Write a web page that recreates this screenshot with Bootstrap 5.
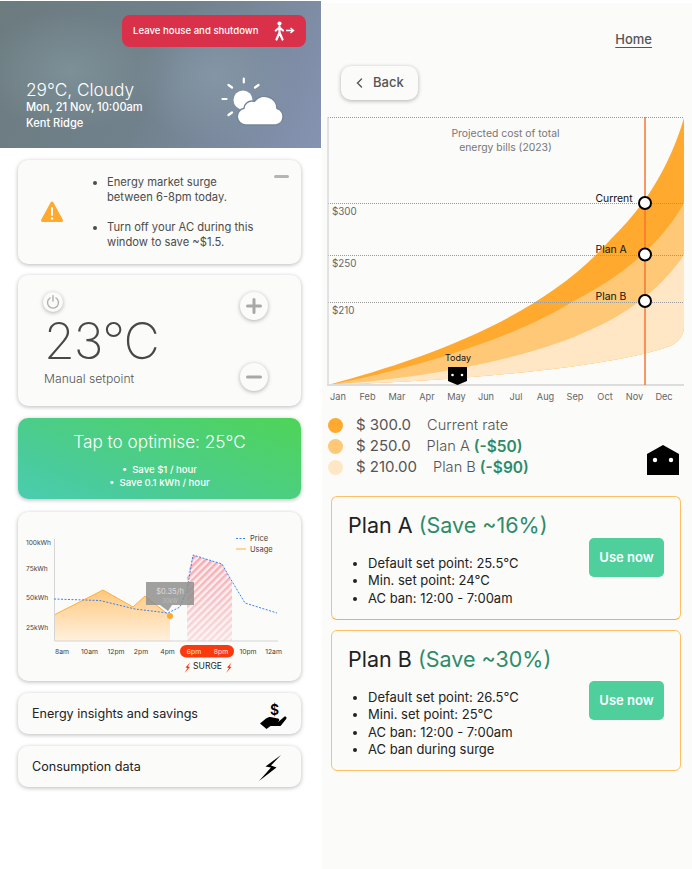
<!DOCTYPE html>
<html lang="en">
<head>
    <meta charset="UTF-8">
    <meta name="viewport" content="width=device-width, initial-scale=1.0">
    <title>Energy dashboard</title>
    <link rel="stylesheet" href="https://cdn.jsdelivr.net/npm/bootstrap@5.3.3/dist/css/bootstrap.min.css">
    <style>
        body { font-family: Inter, "Liberation Sans", sans-serif; background: #fff; color: #444; margin: 0; }
        svg text { font-family: Inter, "Liberation Sans", sans-serif; }
        .page-wrap { width: 692px; height: 869px; overflow: hidden; }
        .left-col { width: 322px; flex: none; }
        .right-col { width: 370px; flex: none; background: #fbfbf9; margin-top: 3px; padding: 0 8px 0 5px; }

        .hero { height: 147px; margin: 1px 1px 0 0; padding: 14px 15px 0 26px; color: #fff;
            background: radial-gradient(ellipse 90px 60px at 70px 70px, #7d9097 0%, transparent 100%),
                radial-gradient(ellipse 80px 70px at 215px 75px, #8496a6 0%, transparent 100%),
                linear-gradient(115deg, #6b7b7e 0%, #71818c 50%, #8593b2 100%); }
        .leave-btn { width: 184px; height: 32px; background: #d93149; border-radius: 8px; color: #fff; font-size: 9.6px; font-weight: 500; padding: 0 11px; }
        .hero-temp { font-size: 17.3px; font-weight: 300; line-height: 20px; }
        .hero-sub { font-size: 11.1px; font-weight: 500; line-height: 15.5px; }
        .hero-info { margin-top: 33px; }
        .weather-icon { margin: -4px 22px 0 0; }

        .soft-card { background: #fbfbf9; border: 0; border-radius: 10px; box-shadow: 0 1px 4px rgba(0,0,0,.28); margin: 0 21px 0 18px; }
        .alert-card { height: 104px; margin-top: 12px; padding: 15px 0 0 22px; }
        .warn-icon { margin-top: 25px; }
        .alert-dash { width: 15px; height: 3px; border-radius: 2px; background: #b5b5b5; margin: 0 12px 0 0; }
        .alert-list { list-style: disc; margin: 0; padding: 0 0 0 43px; font-size: 11.2px; line-height: 15px; color: #4c4c4c; width: 197px; flex: none; }
        .alert-list li + li { margin-top: 15px; }

        .setpoint-card { height: 131px; margin-top: 11px; padding: 17px 33px 0 26px; }
        .round-btn { border-radius: 50%; background: #fbfbf9; box-shadow: 0 1px 4px rgba(0,0,0,.3); }
        .power-btn { width: 20px; height: 20px; margin-left: -1px; }
        .step-btn { width: 28px; height: 28px; }
        .step-col { height: 99px; }
        .big-temp { font-size: 50px; font-weight: 200; line-height: 54px; color: #484848; letter-spacing: -1px; margin-top: 2px; }
        .setpoint-label { font-size: 12.2px; font-weight: 300; line-height: 18px; color: #555; margin-top: 2px; }

        .optimise-card { height: 81px; margin-top: 12px; color: #fff; text-align: center; background: linear-gradient(200deg, #4fd457 0%, #4acb9b 75%, #4bcdb0 100%); padding-top: 13px; }
        .optimise-title { font-size: 17.2px; font-weight: 300; line-height: 22px; }
        .optimise-list { font-size: 9.6px; font-weight: 500; line-height: 13px; margin-top: 10px; }

        .usage-card { height: 169px; margin-top: 13px; overflow: hidden; }
        .link-card { height: 41px; margin-top: 12px; padding: 2px 14px 0; font-size: 12.6px; color: #222; }
        .bolt-icon { margin-right: 5px; }

        .home-link { font-size: 13px; font-weight: 500; color: #555; text-decoration: underline; text-underline-offset: 3px; margin: 26px 32px 0 0; line-height: 20px; text-align: right; }
        .back-btn { width: 77px; height: 34px; background: #fbfbf9; border-radius: 10px; box-shadow: 0 1px 4px rgba(0,0,0,.3); margin: 17px 0 0 14px; font-size: 13px; font-weight: 500; color: #555; padding-left: 15px; gap: 10px; }
        .bill-chart { display: block; margin-top: 17px; }

        .legend-block { margin: 12px 0 0 1px; padding-right: 5px; }
        .legend-row { height: 21px; font-size: 15px; color: #555; }
        .legend-dot { width: 15px; height: 15px; border-radius: 50%; margin-right: 13px; flex: none; }
        .dot-current { background: #ffa92e; }
        .dot-a { background: #ffc877; }
        .dot-b { background: #ffe7c6; }
        .legend-amount { margin-right: 16px; }
        .legend-name { font-weight: 300; font-size: 14.6px; }
        .legend-save { color: #2e8b6a; font-weight: 600; font-size: 15.5px; margin-left: 4px; }
        .home-mark { margin-bottom: 3px; }

        .plan-box { background: #fbfbf9; border: 1.5px solid #ffc064; border-radius: 6px; margin: 0 3px 0 4px; padding: 0 16px; color: #222; }
        .plan-a { height: 124px; margin-top: 18px; border-bottom-color: #ffad3a; }
        .plan-b { height: 141px; margin-top: 10px; }
        .plan-title { font-size: 21.5px; font-weight: 400; line-height: 28px; color: #222; margin: 0; padding-top: 14px; height: 42px; box-sizing: content-box; }
        .plan-save { color: #2e8b6a; }
        .plan-list { font-size: 13px; line-height: 17.4px; margin: 2px 0 0; padding-left: 20px; }
        .use-btn { width: 75px; height: 39px; background: #4ecf9c; border: 0; border-radius: 5px; color: #fff; font-size: 13px; font-weight: 600; padding: 0; flex: none; }
        .use-a { margin-top: 41px; }
        .use-b { margin-top: 50px; }
    </style>
</head>
<body>
    <div class="page-wrap d-flex">
        <div class="left-col">
            <div class="hero">
                <div class="d-flex justify-content-end">
                    <div class="leave-btn d-flex align-items-center justify-content-between">
                        <span>Leave house and shutdown</span>
                        <svg width="22" height="20" viewBox="0 0 22 20">
                            <circle cx="6.5" cy="2.6" r="2.1" fill="#fff"/>
                            <path d="M6.5 5.5v6M6.5 6.5L2.8 9.5M6.5 6.5l3.5 3M6.5 11.5L3.5 18.5M6.5 11.5l3 7" stroke="#fff" stroke-width="2.2" fill="none" stroke-linecap="round"/>
                            <path d="M13 9.5h7M17.5 7l3 2.5-3 2.5" stroke="#fff" stroke-width="1.5" fill="none"/>
                        </svg>
                    </div>
                </div>
                <div class="hero-info d-flex justify-content-between">
                    <div>
                        <div class="hero-temp">29°C, Cloudy</div>
                        <div class="hero-sub">Mon, 21 Nov, 10:00am</div>
                        <div class="hero-sub">Kent Ridge</div>
                    </div>
                    <svg class="weather-icon" width="64" height="50" viewBox="220 76 64 50">
                        <circle cx="243" cy="100" r="9.5" fill="#fff"/>
                        <path d="M243.8 78.5v4M228.5 85l3.5 2.5M258.5 85l-3.5 2.5M222.5 99h4M228.5 115l3.5-2.5" stroke="#fff" stroke-width="2.2" stroke-linecap="round"/>
                        <path d="M246 125a8.5 8.5 0 0 1-2-16.8 8 8 0 0 1 8-7.2c1 0 1.500.1 2.500.4A12.5 12.5 0 0 1 277 108.5a8.5 8.5 0 0 1-1 16.5z" fill="#fff" stroke="#76869a" stroke-width="1.5"/>
                    </svg>
                </div>
            </div>

            <div class="soft-card alert-card card d-flex flex-row">
                <svg class="warn-icon flex-shrink-0" width="24" height="24" viewBox="0 0 24 24">
                    <path d="M12 3L2.5 20.5h19z" fill="#ffa92e" stroke="#ffa92e" stroke-width="3" stroke-linejoin="round"/>
                    <path d="M12 8v7" stroke="#fff" stroke-width="2" stroke-linecap="round"/>
                    <circle cx="12" cy="18.5" r="1.2" fill="#fff"/>
                </svg>
                <ul class="alert-list">
                    <li>Energy market surge between 6-8pm today.</li>
                    <li>Turn off your AC during this window to save ~$1.5.</li>
                </ul>
                <div class="alert-dash ms-auto"></div>
            </div>

            <div class="soft-card setpoint-card card d-flex flex-row justify-content-between">
                <div>
                    <div class="round-btn power-btn d-flex align-items-center justify-content-center">
                        <svg width="14" height="14" viewBox="0 0 14 14"><path d="M4 3a5.5 5.5 0 1 0 6 0M7 .8V6" stroke="#b0b0b0" stroke-width="1.4" fill="none" stroke-linecap="round"/></svg>
                    </div>
                    <div class="big-temp">23°C</div>
                    <div class="setpoint-label">Manual setpoint</div>
                </div>
                <div class="step-col d-flex flex-column justify-content-between">
                    <div class="round-btn step-btn d-flex align-items-center justify-content-center">
                        <svg width="16" height="16" viewBox="0 0 16 16"><path d="M1.5 8h13M8 1.5v13" stroke="#a8a8a8" stroke-width="3" stroke-linecap="round"/></svg>
                    </div>
                    <div class="round-btn step-btn d-flex align-items-center justify-content-center">
                        <svg width="16" height="16" viewBox="0 0 16 16"><path d="M1.5 8h13" stroke="#a8a8a8" stroke-width="3" stroke-linecap="round"/></svg>
                    </div>
                </div>
            </div>

            <div class="soft-card optimise-card card">
                <div class="optimise-title">Tap to optimise: 25°C</div>
                <div class="optimise-list">
                    <div>• &nbsp;Save $1 / hour</div>
                    <div>• &nbsp;Save 0.1 kWh / hour</div>
                </div>
            </div>

            <div class="soft-card usage-card card">
                <svg width="283" height="169" viewBox="18 512 283 169">
                    <defs>
                        <linearGradient id="usageFill" x1="0" y1="0" x2="0" y2="1">
                            <stop offset="0" stop-color="#ffc87c"/>
                            <stop offset="1" stop-color="#fff1df"/>
                        </linearGradient>
                        <pattern id="hatch" width="5" height="5" patternUnits="userSpaceOnUse" patternTransform="rotate(45)">
                            <rect width="5" height="5" fill="#fdeaea"/>
                            <rect width="2.5" height="5" fill="#f6a5ae"/>
                        </pattern>
                        <linearGradient id="hatchFade" x1="0" y1="0" x2="0" y2="1">
                            <stop offset="0" stop-color="#fbfbf9" stop-opacity="0"/>
                            <stop offset="1" stop-color="#fbfbf9" stop-opacity=".65"/>
                        </linearGradient>
                    </defs>
                    <path d="M54 615L103 590L133 607L145 596L170 616V641H54Z" fill="url(#usageFill)"/>
                    <path d="M54 615L103 590L133 607L145 596L170 616" fill="none" stroke="#ffae3c" stroke-width="1"/>
                    <path d="M187 641V578L193 555L222 564L232 582V641Z" fill="url(#hatch)"/>
                    <path d="M187 641V578L193 555L222 564L232 582V641Z" fill="url(#hatchFade)"/>
                    <path d="M54.5 539V641H278" fill="none" stroke="#d4d4d4" stroke-width="1"/>
                    <path d="M54 599L100 600.5L135 609L168 613L180 607L187 590L193 555L222 564L230 578L245 603L277 613" fill="none" stroke="#3b7ff5" stroke-width="1" stroke-dasharray="2 1.5"/>
                    <path d="M146 582H194V605H172L168 611L160 605H146Z" fill="#8f8f8f" opacity=".85"/>
                    <circle cx="170" cy="616" r="3" fill="#ffa92e"/>
                    <text x="170" y="594" text-anchor="middle" font-size="7.5" fill="#ddd">$0.35/h</text>
                    <text x="170" y="603" text-anchor="middle" font-size="5.5" fill="#bbb">30kW</text>
                    <g font-size="6.6" fill="#444">
                        <text x="26" y="544.5">100kWh</text>
                        <text x="26" y="571">75kWh</text>
                        <text x="26" y="600">50kWh</text>
                        <text x="26" y="629.5">25kWh</text>
                    </g>
                    <path d="M236 538.5h10" stroke="#3b7ff5" stroke-width="1" stroke-dasharray="2 1.5"/>
                    <path d="M236 549h10" stroke="#ffae3c" stroke-width="1"/>
                    <text x="250" y="541" font-size="7.5" fill="#444">Price</text>
                    <text x="250" y="552" font-size="7.5" fill="#444">Usage</text>
                    <rect x="180" y="645" width="54" height="12.5" rx="6.25" fill="#f93a0e"/>
                    <g font-size="6.8" fill="#444" text-anchor="middle">
                        <text x="62" y="653.5">8am</text>
                        <text x="89.5" y="653.5">10am</text>
                        <text x="116" y="653.5">12pm</text>
                        <text x="141" y="653.5">2pm</text>
                        <text x="167.5" y="653.5">4pm</text>
                        <text x="194" y="653.5" fill="#ffe3d8">6pm</text>
                        <text x="221" y="653.5" fill="#ffe3d8">8pm</text>
                        <text x="248" y="653.5">10pm</text>
                        <text x="273.5" y="653.5">12am</text>
                    </g>
                    <text x="207.5" y="669" text-anchor="middle" font-size="8.6" fill="#222">SURGE</text>
                    <path d="M190 662.5L185.5 667.5L187.5 668L184.5 673L190 667L188 666.5Z" fill="#f93a0e"/>
                    <path d="M231.5 662.5L227 667.5L229 668L226 673L231.5 667L229.5 666.5Z" fill="#f93a0e"/>
                </svg>
            </div>

            <div class="soft-card link-card card d-flex flex-row align-items-center justify-content-between">
                <span>Energy insights and savings</span>
                <svg width="27" height="28" viewBox="260 699 27 28">
                    <text x="274.5" y="712.5" text-anchor="middle" font-size="14" font-weight="600" fill="#000">$</text>
                    <path d="M260 721.5L266 716.5C268 715 270.5 714.5 273 715.5L278 716.5C280 717 279.5 719.8 277 719.8H272.5H278.5L284 715C285.5 713.8 287.5 715.5 286 717.3L280.5 724H270.5L266.5 727Z" fill="#000"/>
                </svg>
            </div>
            <div class="soft-card link-card card d-flex flex-row align-items-center justify-content-between">
                <span>Consumption data</span>
                <svg class="bolt-icon" width="24" height="28" viewBox="258 753 24 28">
                    <path d="M281 754L265.5 765.5L271 766.5L259 780L276.5 766.5L271 764.5Z" fill="#000"/>
                </svg>
            </div>
        </div>

        <div class="right-col">
            <div class="home-link">Home</div>
            <div class="back-btn d-flex align-items-center">
                <svg width="7" height="10" viewBox="0 0 7 10"><path d="M5.5 1L1.5 5l4 4" stroke="#555" stroke-width="1.4" fill="none" stroke-linecap="round"/></svg>
                <span>Back</span>
            </div>

            <svg class="bill-chart" width="358" height="286" viewBox="327 117 358 286">
                <path d="M328 385C420 360 540 320 610 240C630 220 664 185 684 118L684 325Q684 340 670 346C620 365 480 380 328 385Z" fill="#ffa92e"/>
                <path d="M328 385C420 368 520 335 572 302C605 285 655 255 684 203L684 325Q684 340 670 346C620 365 480 380 328 385Z" fill="#ffc877"/>
                <path d="M328 385C430 378 530 358 590 330C625 315 660 290 684 255L684 325Q684 340 670 346C620 365 480 380 328 385Z" fill="#ffe7c6"/>
                <g stroke="#999" stroke-width="1" stroke-dasharray="1 1">
                    <path d="M328 117.5H684"/>
                    <path d="M328 203.5H684"/>
                    <path d="M328 255.5H684"/>
                    <path d="M328 302.5H684"/>
                </g>
                <path d="M328 117V385" stroke="#d2d2d2" stroke-width="1.2"/>
                <path d="M327 385H684" stroke="#dcdcdc" stroke-width="2"/>
                <path d="M645 117V385" stroke="#f9742e" stroke-width="1.5"/>
                <text x="505.5" y="137" text-anchor="middle" font-size="10.4" fill="#777">Projected cost of total</text>
                <text x="505.5" y="150.5" text-anchor="middle" font-size="10.4" fill="#777">energy bills (2023)</text>
                <g font-size="9.8" fill="#666">
                    <text x="332" y="215">$300</text>
                    <text x="332" y="266.5">$250</text>
                    <text x="332" y="313.5">$210</text>
                </g>
                <g font-size="10.4" fill="#111">
                    <text x="595.5" y="201.5">Current</text>
                    <text x="595.5" y="253">Plan A</text>
                    <text x="595.5" y="299.5">Plan B</text>
                    <text x="458" y="360.5" text-anchor="middle" font-size="9">Today</text>
                </g>
                <g fill="#fff" stroke="#000" stroke-width="2">
                    <circle cx="645" cy="203" r="6"/>
                    <circle cx="645" cy="254.5" r="6"/>
                    <circle cx="645" cy="301" r="6"/>
                </g>
                <path d="M448 367H467V381L457.5 385L448 381Z" fill="#000"/>
                <circle cx="452.5" cy="375" r="1.3" fill="#fff"/>
                <circle cx="462" cy="375" r="1.3" fill="#fff"/>
                <g font-size="9.2" fill="#666" text-anchor="middle">
                    <text x="338" y="400">Jan</text>
                    <text x="367.5" y="400">Feb</text>
                    <text x="397" y="400">Mar</text>
                    <text x="427" y="400">Apr</text>
                    <text x="456.5" y="400">May</text>
                    <text x="486" y="400">Jun</text>
                    <text x="516" y="400">Jul</text>
                    <text x="545.5" y="400">Aug</text>
                    <text x="575" y="400">Sep</text>
                    <text x="605" y="400">Oct</text>
                    <text x="634.5" y="400">Nov</text>
                    <text x="664" y="400">Dec</text>
                </g>
            </svg>

            <div class="legend-block d-flex justify-content-between align-items-end">
                <div>
                    <div class="legend-row d-flex align-items-center">
                        <span class="legend-dot dot-current"></span>
                        <span class="legend-amount">$ 300.0</span>
                        <span class="legend-name">Current rate</span>
                    </div>
                    <div class="legend-row d-flex align-items-center">
                        <span class="legend-dot dot-a"></span>
                        <span class="legend-amount">$ 250.0</span>
                        <span class="legend-name">Plan A</span>
                        <span class="legend-save">(-$50)</span>
                    </div>
                    <div class="legend-row d-flex align-items-center">
                        <span class="legend-dot dot-b"></span>
                        <span class="legend-amount">$ 210.00</span>
                        <span class="legend-name">Plan B</span>
                        <span class="legend-save">(-$90)</span>
                    </div>
                </div>
                <svg class="home-mark" width="32" height="30" viewBox="0 0 32 30">
                    <path d="M0 9L16 0L32 9V30H0Z" fill="#000"/>
                    <circle cx="8" cy="15" r="2.2" fill="#fff"/>
                    <circle cx="24" cy="15" r="2.2" fill="#fff"/>
                </svg>
            </div>

            <div class="plan-box plan-a d-flex justify-content-between">
                <div>
                    <h3 class="plan-title">Plan A <span class="plan-save">(Save ~16%)</span></h3>
                    <ul class="plan-list">
                        <li>Default set point: 25.5°C</li>
                        <li>Min. set point: 24°C</li>
                        <li>AC ban: 12:00 - 7:00am</li>
                    </ul>
                </div>
                <button class="btn use-btn use-a">Use now</button>
            </div>
            <div class="plan-box plan-b d-flex justify-content-between">
                <div>
                    <h3 class="plan-title">Plan B <span class="plan-save">(Save ~30%)</span></h3>
                    <ul class="plan-list">
                        <li>Default set point: 26.5°C</li>
                        <li>Mini. set point: 25°C</li>
                        <li>AC ban: 12:00 - 7:00am</li>
                        <li>AC ban during surge</li>
                    </ul>
                </div>
                <button class="btn use-btn use-b">Use now</button>
            </div>
        </div>
    </div>
    <script src="https://cdn.jsdelivr.net/npm/bootstrap@5.3.3/dist/js/bootstrap.bundle.min.js"></script>
</body>
</html>
